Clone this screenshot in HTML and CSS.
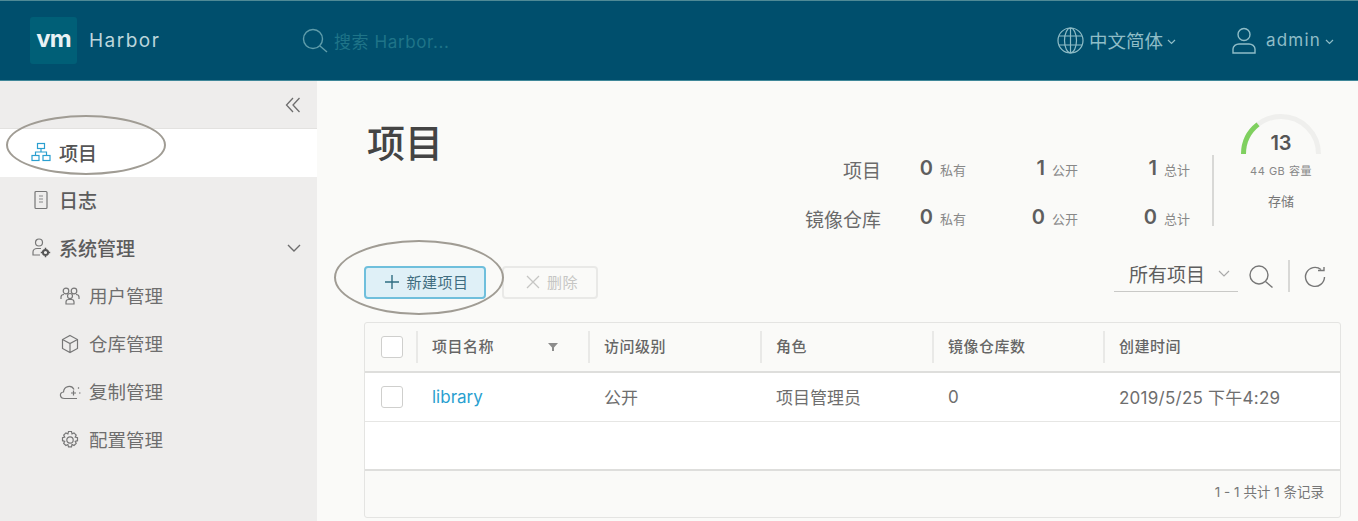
FILE: index.html
```html
<!DOCTYPE html>
<html lang="zh-CN">
<head>
<meta charset="utf-8">
<title>Harbor</title>
<link rel="stylesheet" href="styles.css">
</head>
<body>
<header class="topbar">
	<div class="brand">
		<div class="logo">vm</div>
		<span class="brand-name">Harbor</span>
	</div>
	<div class="search">
		<svg class="search-icon" width="26" height="26" viewBox="0 0 26 26" fill="none" stroke="currentColor" stroke-width="1.4"><circle cx="11" cy="11" r="9.5"/><path d="M18 18l7 6"/></svg>
		<span class="search-text">搜索 Harbor...</span>
	</div>
	<div class="top-right">
		<div class="top-item lang">
			<svg width="27" height="27" viewBox="0 0 27 27" fill="none" stroke="currentColor" stroke-width="1.2"><circle cx="13.5" cy="13.5" r="12.5"/><ellipse cx="13.5" cy="13.5" rx="6" ry="12.5"/><path d="M13.5 1v25M2 9h23M2 18h23"/></svg>
			<span class="top-label">中文简体</span>
			<svg class="top-caret" width="9" height="6" viewBox="0 0 9 6" fill="none" stroke="currentColor" stroke-width="1.2"><path d="M1 1l3.500 3.500L8 1"/></svg>
		</div>
		<div class="top-item user">
			<svg width="26" height="28" viewBox="0 0 26 28" fill="none" stroke="currentColor" stroke-width="1.4"><circle cx="13" cy="7.500" r="6"/><path d="M2 26v-4c0-3 3-5 6-5h10c3 0 6 2 6 5v4z"/></svg>
			<span class="top-label user-name">admin</span>
			<svg class="top-caret" width="9" height="6" viewBox="0 0 9 6" fill="none" stroke="currentColor" stroke-width="1.2"><path d="M1 1l3.500 3.500L8 1"/></svg>
		</div>
	</div>
</header>

<div class="page">
	<nav class="sidebar">
		<div class="collapse">
			<svg width="16" height="16" viewBox="0 0 16 16" fill="none" stroke="#6d6d6d" stroke-width="1.3"><path d="M8 1L1.500 8 8 15M14.500 1L8 8l6.500 7"/></svg>
		</div>
		<a class="nav-item active">
			<svg class="nav-icon" width="20" height="20" viewBox="0 0 20 20" fill="none" stroke="#2a9fd0" stroke-width="1.2"><rect x="6.500" y="1.500" width="7" height="5"/><rect x="1" y="13.500" width="7" height="5"/><rect x="12" y="13.500" width="7" height="5"/><path d="M10 6.500v3.500M4.500 13.500V10h11v3.500"/></svg>
			<span>项目</span>
		</a>
		<a class="nav-item">
			<svg class="nav-icon" width="20" height="20" viewBox="0 0 20 20" fill="none" stroke="#777" stroke-width="1.200"><rect x="4" y="1.500" width="12" height="17" rx="1"/><path d="M8 6h4M8 9h4M8 12h4" stroke="#aaa" stroke-width="1.500"/></svg>
			<span>日志</span>
		</a>
		<a class="nav-item">
			<svg class="nav-icon" width="20" height="20" viewBox="0 0 20 20" fill="none" stroke="#777" stroke-width="1.200"><circle cx="8" cy="4.500" r="3.500"/><path d="M9 17H2v-3c0-2 2-3.500 4-3.500h4"/><circle cx="14.500" cy="14.500" r="2.600" stroke="#555" stroke-width="2"/><path d="M14.500 9.800v1.800M14.500 17.400v1.800M9.800 14.500h1.800M17.400 14.500h1.800" stroke="#555" stroke-width="1.500"/></svg>
			<span>系统管理</span>
			<svg class="nav-caret" width="14" height="9" viewBox="0 0 14 9" fill="none" stroke="#6d6d6d" stroke-width="1.400"><path d="M1 1l6 6 6-6"/></svg>
		</a>
		<a class="nav-sub">
			<svg class="nav-icon" width="20" height="20" viewBox="0 0 20 20" fill="none" stroke="#777" stroke-width="1.200"><circle cx="6" cy="5" r="2.800"/><circle cx="14" cy="5" r="2.800"/><circle cx="10" cy="10" r="2.500"/><path d="M6 18v-2c0-1.500 1-2.500 2.500-2.500h3c1.500 0 2.500 1 2.500 2.500v2zM1 13v-2c0-1.500 1-2.500 3-2.500M19 13v-2c0-1.500-1-2.500-3-2.500"/></svg>
			<span>用户管理</span>
		</a>
		<a class="nav-sub">
			<svg class="nav-icon" width="20" height="20" viewBox="0 0 20 20" fill="none" stroke="#777" stroke-width="1.200"><path d="M10 1.500l7.500 4v9l-7.500 4-7.500-4v-9zM2.500 5.500l7.500 4 7.500-4M10 9.500v9"/></svg>
			<span>仓库管理</span>
		</a>
		<a class="nav-sub">
			<svg class="nav-icon nav-icon-wide" width="22" height="20" viewBox="0 0 22 20" fill="none" stroke="#777" stroke-width="1.200"><path d="M18 16.500H5.500C.5 16.500 0 10.500 4.500 10 5 4 12.500 2.500 15 7.500"/><path d="M14.500 8.500v5M12 11h5M19 6.500l1-1M20 11h1.500"/></svg>
			<span>复制管理</span>
		</a>
		<a class="nav-sub">
			<svg class="nav-icon" width="20" height="20" viewBox="0 0 20 20" fill="none" stroke="#777" stroke-width="1.200"><circle cx="10" cy="10" r="3.200"/><path d="M8.500 1.500h3l.5 2.300 2-.9 2.200 2.200-1 2 2.300.6v3l-2.300.6 1 2-2.200 2.200-2-1-.5 2.300h-3l-.6-2.300-2 1-2.200-2.200 1-2-2.200-.6v-3l2.200-.6-1-2 2.200-2.200 2 .9z"/></svg>
			<span>配置管理</span>
		</a>
	</nav>

	<main class="content">
		<div class="head">
			<h1 class="title">项目</h1>
			<div class="stats">
				<div class="stat-grid">
					<span class="stat-name">项目</span>
					<span class="stat-val">0</span><span class="stat-unit">私有</span>
					<span class="stat-val">1</span><span class="stat-unit">公开</span>
					<span class="stat-val">1</span><span class="stat-unit">总计</span>
					<span class="stat-name">镜像仓库</span>
					<span class="stat-val">0</span><span class="stat-unit">私有</span>
					<span class="stat-val">0</span><span class="stat-unit">公开</span>
					<span class="stat-val">0</span><span class="stat-unit">总计</span>
				</div>
				<div class="storage">
					<div class="gauge">
						<svg width="84" height="44" viewBox="0 0 84 44" fill="none" stroke-width="5"><path d="M4.500 42A37.500 37.500 0 0 1 79.500 42" stroke="#efefed"/><path d="M4.500 42A37.500 37.500 0 0 1 19 12.400" stroke="#7fd05f"/></svg>
						<span class="gauge-num">13</span>
					</div>
					<div class="gauge-cap">44 GB 容量</div>
					<div class="gauge-name">存储</div>
				</div>
			</div>
		</div>

		<div class="toolbar">
			<button class="btn btn-new">
				<svg width="16" height="16" viewBox="0 0 16 16" fill="none" stroke="#2f6d82" stroke-width="1.400"><path d="M8 1v14M1 8h14"/></svg>
				新建项目
			</button>
			<button class="btn btn-del">
				<svg width="14" height="14" viewBox="0 0 14 14" fill="none" stroke="#c6c6c4" stroke-width="1.300"><path d="M1 1l12 12M13 1L1 13"/></svg>
				删除
			</button>
			<div class="tools">
				<div class="select">
					<span>所有项目</span>
					<svg width="12" height="7" viewBox="0 0 12 7" fill="none" stroke="#aaa" stroke-width="1.200"><path d="M1 1l5 5 5-5"/></svg>
				</div>
				<svg class="tool-search" width="26" height="26" viewBox="0 0 26 26" fill="none" stroke="#777" stroke-width="1.400"><circle cx="11" cy="11" r="9"/><path d="M17.500 17.500l7 6"/></svg>
				<span class="tool-sep"></span>
				<svg class="tool-refresh" width="22" height="22" viewBox="0 0 22 22" fill="none" stroke="#777" stroke-width="1.400"><path d="M17 3.500A9.500 9.500 0 1 0 20.500 11"/><path d="M12.500 4.500h6v-3.500" transform="translate(1.500 0)"/></svg>
			</div>
		</div>

		<div class="table">
			<div class="row row-head">
				<div class="cell cell-check"><span class="check"></span></div>
				<div class="cell cell-name"><span>项目名称</span><svg class="filter" width="10" height="10" viewBox="0 0 10 10" fill="#8c8c8c"><path d="M0 1h10L6 5.500V9H4V5.500z"/></svg></div>
				<div class="cell">访问级别</div>
				<div class="cell">角色</div>
				<div class="cell">镜像仓库数</div>
				<div class="cell">创建时间</div>
			</div>
			<div class="row row-body">
				<div class="cell cell-check"><span class="check"></span></div>
				<div class="cell"><a class="link">library</a></div>
				<div class="cell">公开</div>
				<div class="cell">项目管理员</div>
				<div class="cell">0</div>
				<div class="cell cell-date">2019/5/25 下午4:29</div>
			</div>
			<div class="row-empty"></div>
			<div class="table-foot">1 - 1 共计 1 条记录</div>
		</div>
	</main>
</div>

<!-- hand drawn rings over the screenshot -->
<span class="ring ring-nav"></span>
<span class="ring ring-btn"></span>
</body>
</html>
```

FILE: styles.css
```css
* { box-sizing: border-box; }
body {
    margin: 0;
    height: 521px;
    overflow: hidden;
    position: relative;
    font-family: "Inter", "Noto Sans CJK SC", sans-serif;
    color: #666;
    background: #fafaf8;
}

/* top bar */
.topbar {
    height: 81px;
    display: flex;
    align-items: center;
    background: #004f6d;
    border-top: 1px solid #4f8a96;
    border-bottom: 1px solid #3f8799;
    color: #8fbdc7;
}
.brand { width: 302px; display: flex; align-items: center; padding-left: 30px; }
.logo {
    width: 47px;
    height: 47px;
    border-radius: 3px;
    background: #005f77;
    color: #e8f2f4;
    font-weight: 700;
    font-size: 24px;
    letter-spacing: -1px;
    line-height: 44px;
    text-align: center;
}
.brand-name { margin-left: 12px; font-size: 19px; letter-spacing: 1.5px; color: #bcd6dc; }
.search { display: flex; align-items: center; gap: 6px; color: #5f9dab; }
.search-text { font-size: 17px; color: #1f7488; letter-spacing: .6px; }
.top-right { margin-left: auto; display: flex; align-items: center; padding-right: 24px; }
.top-item { display: flex; align-items: center; }
.top-label { margin-left: 5px; font-size: 18.500px; padding-bottom: 2px; }
.top-caret { margin-left: 4px; margin-top: 2px; }
.user { margin-left: 55px; }
.user-name { margin-left: 9px; font-size: 17px; letter-spacing: 1.200px; }

/* sidebar */
.page { display: flex; height: 440px; }
.sidebar { width: 317px; flex: none; background: #eeedec; }
.collapse {
    height: 48px;
    display: flex;
    justify-content: flex-end;
    align-items: center;
    padding-right: 16px;
    border-bottom: 1px solid #e3e2e0;
}
.nav-item, .nav-sub { display: flex; align-items: center; padding-bottom: 2px; color: #5c5c5c; }
.nav-item span, .nav-sub span { padding-bottom: 2px; }
.nav-item { height: 48px; padding-left: 31px; font-size: 19px; font-weight: 500; }
.nav-item .nav-icon { margin-right: 8px; }
.nav-item.active { background: #fff; color: #555; }
.nav-item.active span { padding-bottom: 0; }
.nav-caret { margin-left: auto; margin-right: 16px; }
.nav-sub { height: 48px; padding-left: 59px; font-size: 18.500px; color: #6e6e6e; }
.nav-sub .nav-icon { margin: 0 9px 0 1px; }
.nav-sub .nav-icon-wide { margin: 0 8px 0 0; }

/* main */
.content { flex: 1; padding: 0 17px 0 47px; }
.head { height: 185px; display: flex; justify-content: space-between; }
.title { margin: 39px 0 0 3px; font-size: 38px; font-weight: 500; line-height: 46px; color: #444; }
.stats { display: flex; }
.stat-grid {
    display: grid;
    grid-template-columns: 90px 52px 33px 79px 33px 79px 33px;
    grid-template-rows: 49px 49px;
    margin-top: 64px;
    margin-right: 22px;
    align-items: center;
}
.stat-name { font-size: 19px; color: #6b6b6b; text-align: right; }
.stat-val { font-size: 20px; font-weight: 600; color: #5e5e5e; text-align: right; padding-bottom: 3px; }
.stat-unit { font-size: 13px; color: #888; margin-left: 7px; white-space: nowrap; }
.storage {
    width: 129px;
    height: 71px;
    margin-top: 74px;
    border-left: 2px solid #d8d8d6;
    text-align: center;
    position: relative;
}
.gauge {
    position: absolute;
    left: 25px;
    top: -43px;
    width: 84px;
    height: 44px;
}
.gauge svg { display: block; }
.gauge-num { position: absolute; left: 0; right: 0; top: 19px; font-size: 20px; font-weight: 600; color: #555; }
.gauge-cap {
    position: absolute;
    left: 0;
    right: 0;
    margin-left: 7px;
    top: 7px;
    font-size: 11px;
    letter-spacing: .5px;
    color: #888;
}
.gauge-name {
    position: absolute;
    left: 0;
    right: 0;
    margin-left: 7px;
    top: 36px;
    font-size: 13px;
    color: #777;
}

/* toolbar */
.toolbar { height: 56px; display: flex; align-items: flex-start; }
.btn {
    height: 33px;
    display: flex;
    align-items: center;
    justify-content: center;
    border-radius: 4px;
    font-family: inherit;
    font-size: 15px;
    letter-spacing: .5px;
    padding: 0 0 2px;
}
.btn-new {
    width: 122px;
    gap: 6px;
    padding-left: 3px;
    background: #dff0f7;
    border: 2px solid #6fbfdc;
    color: #3f6d80;
}
.btn-del {
    width: 96px;
    margin-left: 16px;
    gap: 7px;
    padding-left: 4px;
    background: #fafaf8;
    border: 2px solid #e9e9e7;
    color: #c6c6c4;
}
.tools { margin-left: auto; display: flex; align-items: center; margin-top: -7px; margin-right: 15px; }
.select {
    width: 124px;
    height: 33px;
    padding: 0 0 3px 15px;
    display: flex;
    align-items: center;
    gap: 13px;
    border-bottom: 1px solid #c9c9c7;
    font-size: 19px;
    color: #5e5e5e;
}
.tool-search { margin: 2px 0 0 10px; }
.tool-sep { width: 2px; height: 32px; margin: 0 14px 0 14px; background: #d8d8d6; }
.tool-refresh { margin-top: 2px; }

/* table */
.table {
    height: 196px;
    border: 1px solid #e4e4e2;
    border-radius: 3px;
    background: #fafaf8;
}
.row {
    display: grid;
    grid-template-columns: 51px 172px 172px 172px 171px 1fr;
    align-items: center;
}
.row-head { height: 50px; border-bottom: 2px solid #dededc; font-size: 15px; letter-spacing: .5px; font-weight: 500; color: #666; }
.row-body { height: 49px; padding-bottom: 1px; background: #fff; border-bottom: 1px solid #e6e6e4; font-size: 17px; color: #6e6e6e; }
.row-empty { height: 49px; background: #fff; border-bottom: 2px solid #dededc; }
.cell { padding-left: 16px; display: flex; align-items: center; }
.row-head .cell { height: 32px; padding-left: 14px; padding-bottom: 3px; border-left: 2px solid #e9e9e7; }
.row-head .cell-check { padding: 0 0 0 16px; border-left: 0; }
.cell-date { letter-spacing: .25px; white-space: nowrap; }
.filter { margin-left: auto; margin-right: 30px; margin-top: 3px; }
.check {
    width: 22px;
    height: 22px;
    background: #fff;
    border: 1px solid #cfcfcd;
    border-radius: 3px;
}
.link { color: #2a9fd0; }
.table-foot { height: 45px; padding-right: 16px; text-align: right; line-height: 43px; font-size: 13.500px; color: #777; }

/* annotation rings */
.ring {
    position: absolute;
    border: 2px solid #a09c94;
    border-radius: 50%;
}
.ring-nav { left: 6px; top: 115px; width: 160px; height: 60px; }
.ring-btn { left: 334px; top: 240px; width: 170px; height: 75px; }
```
